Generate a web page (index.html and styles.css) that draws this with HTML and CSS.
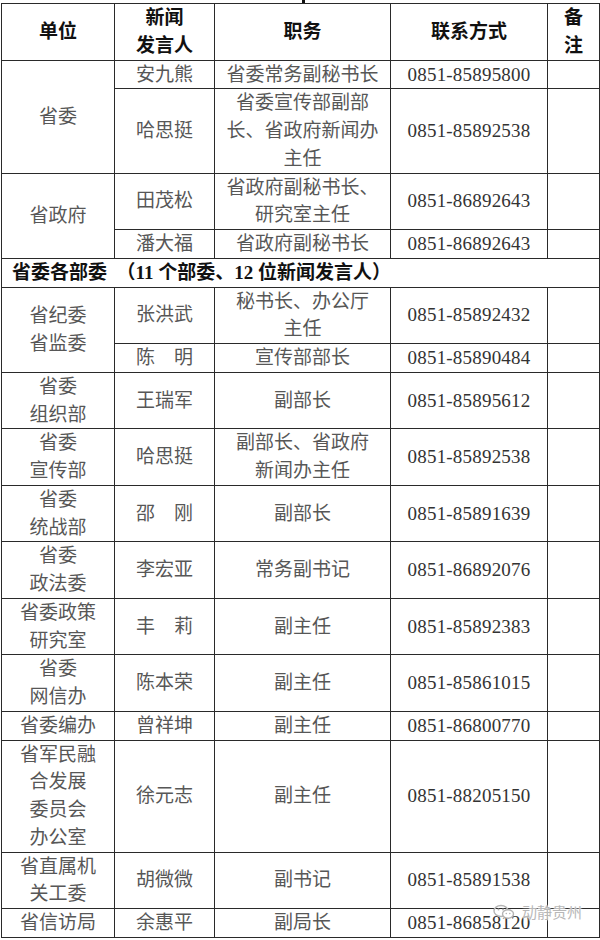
FILE: index.html
```html
<!DOCTYPE html>
<html lang="zh-CN">
<head>
<meta charset="utf-8">
<title>新闻发言人名单</title>
<link rel="stylesheet" href="styles.css">
</head>
<body>
<div class="page">
  <div class="tick"></div>
  <table class="roster">
    <colgroup>
      <col class="c-unit"><col class="c-name"><col class="c-post"><col class="c-tel"><col class="c-note">
    </colgroup>
    <thead>
      <tr>
        <th>单位</th>
        <th>新闻<br>发言人</th>
        <th>职务</th>
        <th>联系方式</th>
        <th>备<br>注</th>
      </tr>
    </thead>
    <tbody>
      <tr>
        <td rowspan="2">省委</td>
        <td>安九熊</td>
        <td>省委常务副秘书长</td>
        <td class="tel">0851-85895800</td>
        <td></td>
      </tr>
      <tr>
        <td>哈思挺</td>
        <td>省委宣传部副部<br>长、省政府新闻办<br>主任</td>
        <td class="tel">0851-85892538</td>
        <td></td>
      </tr>
      <tr>
        <td rowspan="2">省政府</td>
        <td>田茂松</td>
        <td>省政府副秘书长、<br>研究室主任</td>
        <td class="tel">0851-86892643</td>
        <td></td>
      </tr>
      <tr>
        <td>潘大福</td>
        <td>省政府副秘书长</td>
        <td class="tel">0851-86892643</td>
        <td></td>
      </tr>
      <tr>
        <td colspan="5" class="section">省委各部委　（<span class="num">11</span> 个部委、<span class="num">12</span> 位新闻发言人）</td>
      </tr>
      <tr>
        <td rowspan="2">省纪委<br>省监委</td>
        <td>张洪武</td>
        <td>秘书长、办公厅<br>主任</td>
        <td class="tel">0851-85892432</td>
        <td></td>
      </tr>
      <tr>
        <td>陈　明</td>
        <td>宣传部部长</td>
        <td class="tel">0851-85890484</td>
        <td></td>
      </tr>
      <tr>
        <td>省委<br>组织部</td>
        <td>王瑞军</td>
        <td>副部长</td>
        <td class="tel">0851-85895612</td>
        <td></td>
      </tr>
      <tr>
        <td>省委<br>宣传部</td>
        <td>哈思挺</td>
        <td>副部长、省政府<br>新闻办主任</td>
        <td class="tel">0851-85892538</td>
        <td></td>
      </tr>
      <tr>
        <td>省委<br>统战部</td>
        <td>邵　刚</td>
        <td>副部长</td>
        <td class="tel">0851-85891639</td>
        <td></td>
      </tr>
      <tr>
        <td>省委<br>政法委</td>
        <td>李宏亚</td>
        <td>常务副书记</td>
        <td class="tel">0851-86892076</td>
        <td></td>
      </tr>
      <tr>
        <td>省委政策<br>研究室</td>
        <td>丰　莉</td>
        <td>副主任</td>
        <td class="tel">0851-85892383</td>
        <td></td>
      </tr>
      <tr>
        <td>省委<br>网信办</td>
        <td>陈本荣</td>
        <td>副主任</td>
        <td class="tel">0851-85861015</td>
        <td></td>
      </tr>
      <tr>
        <td>省委编办</td>
        <td>曾祥坤</td>
        <td>副主任</td>
        <td class="tel">0851-86800770</td>
        <td></td>
      </tr>
      <tr>
        <td>省军民融<br>合发展<br>委员会<br>办公室</td>
        <td>徐元志</td>
        <td>副主任</td>
        <td class="tel">0851-88205150</td>
        <td></td>
      </tr>
      <tr>
        <td>省直属机<br>关工委</td>
        <td>胡微微</td>
        <td>副书记</td>
        <td class="tel">0851-85891538</td>
        <td></td>
      </tr>
      <tr>
        <td>省信访局</td>
        <td>余惠平</td>
        <td>副局长</td>
        <td class="tel">0851-86858120</td>
        <td></td>
      </tr>
    </tbody>
  </table>
  <div class="watermark">
    <svg class="wm-icon" viewBox="0 0 22 16" width="22" height="16" aria-hidden="true">
      <ellipse cx="8" cy="7" rx="7" ry="5.5" fill="none" stroke="#b4b4b4" stroke-width="1.4"/>
      <ellipse cx="15" cy="10" rx="5.5" ry="4.2" fill="#fff" stroke="#b4b4b4" stroke-width="1.4"/>
      <circle cx="5.5" cy="5.5" r="1" fill="#b4b4b4"/>
      <circle cx="10" cy="5.5" r="1" fill="#b4b4b4"/>
      <circle cx="13.3" cy="9.5" r="0.8" fill="#b4b4b4"/>
      <circle cx="16.8" cy="9.5" r="0.8" fill="#b4b4b4"/>
    </svg>
    <span class="wm-text">动静贵州</span>
  </div>
</div>
</body>
</html>
```

FILE: styles.css
```css
html, body {
  margin: 0;
  padding: 0;
  background: #ffffff;
}

.page {
  position: relative;
  width: 600px;
  height: 940px;
  overflow: hidden;
}

.tick {
  width: 3px;
  height: 3px;
  margin-left: 302px;
  background: #111;
}

.roster {
  margin-left: 1px;
  width: 598px;
  table-layout: fixed;
  border-collapse: collapse;
  font-family: "Liberation Serif", "Noto Sans CJK SC", serif;
  font-size: 19px;
  line-height: 27.75px;
  color: #575757;
}

.c-unit { width: 113px; }
.c-name { width: 100px; }
.c-post { width: 176px; }
.c-tel { width: 157px; }
.c-note { width: 52px; }

.roster th,
.roster td {
  border: 1px solid #2a2a2a;
  padding: 0 1px;
  text-align: center;
  vertical-align: middle;
  white-space: nowrap;
}

.roster th {
  color: #111;
  font-weight: 700;
}

.roster td.tel {
  color: #333;
  letter-spacing: 0.2px;
}

.roster td.section {
  text-align: left;
  padding-left: 10px;
  color: #111;
  font-weight: 700;
}

.num {
  font-weight: 700;
}

.watermark {
  position: absolute;
  left: 493px;
  top: 902px;
  display: flex;
  align-items: center;
  gap: 7px;
}

.wm-text {
  font-family: "Noto Sans CJK SC", sans-serif;
  font-size: 15px;
  line-height: 20px;
  color: #b8b8b8;
  text-shadow: 0 0 2px #ffffff, 0 0 2px #ffffff;
}
```
